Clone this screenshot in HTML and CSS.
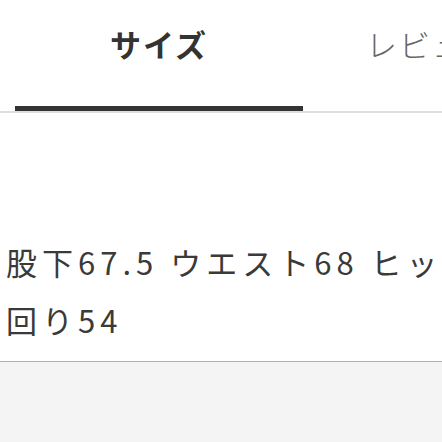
FILE: index.html
```html
<!DOCTYPE html>
<html lang="ja">
<head>
    <meta charset="UTF-8">
    <meta name="viewport" content="width=device-width, initial-scale=1.0">
    <title>サイズ</title>
    <link rel="stylesheet" href="styles.css">
</head>
<body>
    <div class="tabs">
        <div class="tab active">サイズ</div>
        <div class="tab">レビュー</div>
    </div>

    <div class="detail">
        <p class="detail-text">股下67.5 ウエスト68 ヒップ90 もも回り54</p>
    </div>

    <div class="footer-area"></div>
</body>
</html>
```

FILE: styles.css
```css
html, body {
    height: 100%;
}
body {
    margin: 0;
    overflow: hidden;
    display: flex;
    flex-direction: column;
    font-family: "Noto Sans CJK JP", "Noto Sans", sans-serif;
    color: #333;
    background: white;
}
.tabs {
    display: flex;
    padding-left: 15px;
    border-bottom: 2px solid #dedede;
    white-space: nowrap;
}
.tab {
    flex-shrink: 0;
    box-sizing: border-box;
    height: 111px;
    padding-top: 28px;
    font-size: 31px;
    line-height: 32px;
    letter-spacing: 2px;
    color: #666;
    font-weight: 300;
    margin-left: 63px;
}
.tab.active {
    width: 288px;
    margin-left: 0;
    text-align: center;
    font-weight: bold;
    color: #333;
    border-bottom: 5px solid #333;
}
.detail {
    flex-shrink: 0;
    width: 625px;
    padding: 120px 0 12px 6px;
    border-bottom: 1px solid #b0b0b0;
}
.detail-text {
    margin: 0;
    font-size: 31px;
    line-height: 58px;
    letter-spacing: 5px;
    color: #3a3a3a;
}
.footer-area {
    flex: 1;
    background: #f4f4f4;
}
```
